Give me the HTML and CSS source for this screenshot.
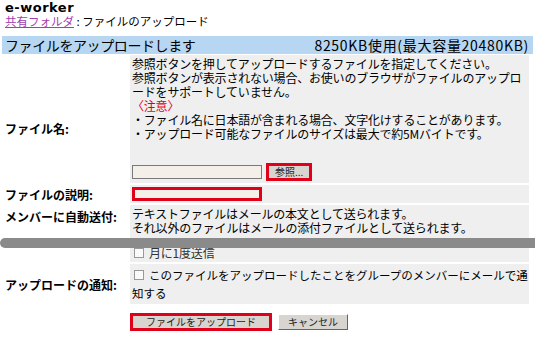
FILE: index.html
```html
<!DOCTYPE html>
<html lang="ja">
<head>
    <meta charset="UTF-8">
    <title>ファイルのアップロード</title>
    <link rel="stylesheet" href="styles.css">
</head>
<body>
    <div class="page">
        <!-- Header -->
        <div class="site">e-worker</div>
        <div class="crumbs"><a href="#">共有フォルダ</a> : ファイルのアップロード</div>

        <div class="title-bar">
            <span>ファイルをアップロードします</span>
            <span class="usage">8250KB使用(最大容量20480KB)</span>
        </div>

        <!-- Upload form -->
        <div class="form">
            <div class="label low">ファイル名:</div>
            <div class="value">
                <p>参照ボタンを押してアップロードするファイルを指定してください。<br>参照ボタンが表示されない場合、お使いのブラウザがファイルのアップロ<br>ードをサポートしていません。</p>
                <p class="note">〈注意〉</p>
                <p>・ファイル名に日本語が含まれる場合、文字化けすることがあります。<br>・アップロード可能なファイルのサイズは最大で約5Mバイトです。</p>
                <div class="file-row">
                    <span class="field"></span>
                    <span class="btn hot small">参照...</span>
                </div>
            </div>

            <div class="label">ファイルの説明:</div>
            <div class="value short">
                <span class="field hot"></span>
            </div>

            <div class="label top">メンバーに自動送付:</div>
            <div class="value">
                <p>テキストファイルはメールの本文として送られます。<br>それ以外のファイルはメールの添付ファイルとして送られます。</p>
                <p class="check"><span class="box"></span>月に1度送信</p>
            </div>

            <div class="label">アップロードの通知:</div>
            <div class="value">
                <p class="check notify"><span class="box"></span>このファイルをアップロードしたことをグループのメンバーにメールで通知する</p>
            </div>

            <div></div>
            <div class="actions">
                <span class="btn hot wide">ファイルをアップロード</span>
                <span class="btn">キャンセル</span>
            </div>
        </div>

        <div class="scroll-bar"></div>
    </div>
</body>
</html>
```

FILE: styles.css
```css
/* Global */
body {
    margin: 0;
    padding: 2px 2px 0 2px;
    font-family: "Noto Sans CJK JP", "Liberation Sans", sans-serif;
    font-size: 12px;
    color: #000;
    background: #fff;
}
p {
    margin: 0;
}
.page {
    position: relative;
    width: 531px;
}

/* Header */
.site {
    font-family: "DejaVu Sans", Verdana, sans-serif;
    font-weight: bold;
    font-size: 13px;
    line-height: 12px;
    letter-spacing: 0.5px;
    padding-left: 3px;
}
.crumbs {
    padding-left: 3px;
    line-height: 14px;
    font-size: 11.5px;
}
.crumbs a {
    color: #a040b0;
}
.title-bar {
    display: flex;
    justify-content: space-between;
    align-items: center;
    height: 18px;
    margin-top: 8px;
    padding: 0 4px 0 3px;
    background: #b6d6f2;
    font-size: 14px;
    letter-spacing: -0.4px;
}
.usage {
    letter-spacing: 0.7px;
}

/* Form grid */
.form {
    display: grid;
    grid-template-columns: 126px 1fr;
    column-gap: 2px;
    row-gap: 2px;
    margin-top: 1px;
    width: 527px;
}
.label {
    display: flex;
    align-items: center;
    padding-left: 3px;
    font-weight: bold;
    font-size: 12px;
}
.label.low {
    padding-top: 18px;
}
.label.top {
    align-items: flex-start;
    padding-top: 3px;
}
.value {
    background: #efefef;
    padding: 2px 0 2px 2px;
    line-height: 14px;
    letter-spacing: -0.2px;
}
.value.short {
    padding: 2px;
    height: 14px;
}
.note {
    color: #e0001a;
}
.file-row {
    display: flex;
    align-items: center;
    gap: 4px;
    margin-top: 22px;
}
.field {
    display: inline-block;
    width: 128px;
    height: 12px;
    background: #f4efe8;
    border: 1px solid #7a7a7a;
}
.field.hot {
    width: 124px;
    height: 8px;
    border: 3px solid #e0001a;
}
.check {
    margin-top: 11px;
    color: #333;
}
.box {
    display: inline-block;
    width: 8px;
    height: 8px;
    margin: 0 5px 0 2px;
    border: 1px solid #999;
    background: #fafafa;
}
.notify {
    margin: 0;
    font-size: 11.5px;
    letter-spacing: 0;
    line-height: 18px;
    color: #000;
}

/* Buttons */
.actions {
    display: flex;
    gap: 6px;
    padding: 7px 0 0 0;
}
.btn {
    display: inline-block;
    background: #d8d4cf;
    border: 1px solid #fff;
    border-right-color: #666;
    border-bottom-color: #666;
    padding: 0 9px;
    font-size: 10px;
    line-height: 14px;
    letter-spacing: 0;
    white-space: nowrap;
    color: #222;
}
.btn.hot {
    border: 3px solid #e0001a;
    padding: 0 6px;
    line-height: 12px;
}
.btn.wide {
    width: 136px;
    text-align: center;
    padding: 0;
}
.actions .btn {
    align-self: flex-start;
}
.actions .btn:not(.hot) {
    margin-top: 1px;
}

/* Overlay bar across the page */
.scroll-bar {
    position: absolute;
    left: -2px;
    top: 236px;
    width: 535px;
    height: 10px;
    background: #8a8a8a;
    border-radius: 5px 0 0 5px;
}
```
